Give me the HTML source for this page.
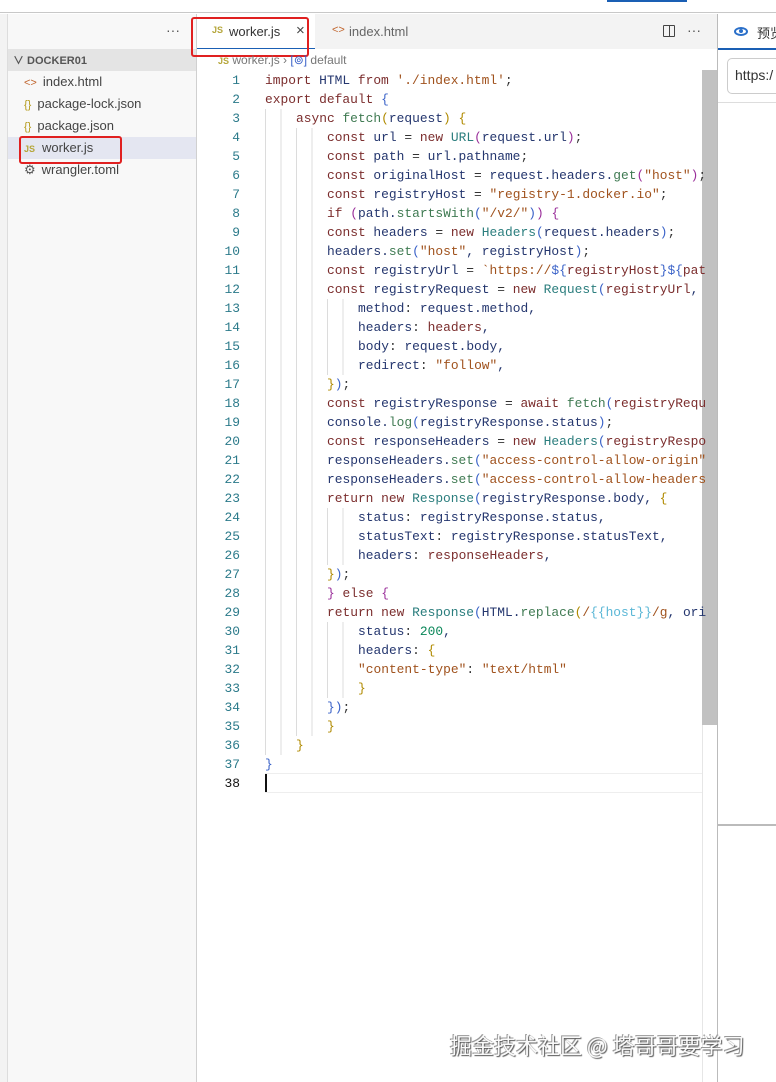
<!DOCTYPE html>
<html><head><meta charset="utf-8"><style>
*{margin:0;padding:0;box-sizing:border-box}
body{width:776px;height:1082px;overflow:hidden;background:#fff;font-family:"Liberation Sans","Noto Sans CJK SC",sans-serif;position:relative}
.a{position:absolute}
.code{position:absolute;left:197px;top:71px;width:506px}
.ln{height:19px;line-height:19px;font-family:"Liberation Mono",monospace;font-size:12.9px;white-space:pre;position:relative;color:#24366e}
.ln .no{position:absolute;left:0;width:43px;text-align:right;color:#2b7a8a}
.ln .c{position:absolute;left:68px}
.ind{display:inline-block;height:19px;vertical-align:top;background:repeating-linear-gradient(to right,#dcdcdc 0 1px,transparent 1px 15.5px)}
.k{color:#7b2d2d}.s{color:#a0521d}.f{color:#3f7a52}.n{color:#098658}.p{color:#333}.b1{color:#b08a00}.b2{color:#3a62c8}.b3{color:#9a2f9a}.t{color:#2a7d7d}.cy{color:#5bb7d6}
.side div{height:22px;line-height:22px;font-size:13px;color:#444}
</style></head><body>
<div class="a" style="left:0;top:0;width:776px;height:13px;background:#fff;border-bottom:1px solid #c8c8c8"></div>
<div class="a" style="left:607px;top:0;width:80px;height:2px;background:#1a5fb4"></div>
<div class="a" style="left:0;top:14px;width:8px;height:1068px;background:#f3f3f3;border-right:1px solid #ddd"></div>
<div class="a" style="left:8px;top:14px;width:189px;height:1068px;background:#f8f8f8;border-right:1px solid #d0d0d0"></div>
<div class="a" style="left:166px;top:22px;font-size:14px;color:#555">···</div>
<div class="a" style="left:8px;top:49px;width:188px;height:22px;background:#e4e4e4"></div>
<div class="a" style="left:13px;top:52px;font-size:11px;font-weight:bold;color:#555">∨ DOCKER01</div>
<div class="a side" style="left:24px;top:71px;width:172px">
<div><span style="color:#c0642c;font-size:11px;margin-right:6px">&lt;&gt;</span>index.html</div>
<div><span style="color:#b59b1c;font-size:11px;margin-right:6px">{}</span>package-lock.json</div>
<div><span style="color:#b59b1c;font-size:11px;margin-right:6px">{}</span>package.json</div>
<div style="background:#e4e6f1;margin-left:-16px;padding-left:16px"><span style="color:#b5a63a;font-size:9px;font-weight:bold;margin-right:7px">JS</span>worker.js</div>
<div><span style="color:#555;font-size:13px;margin-right:6px">⚙</span>wrangler.toml</div>
</div>
<div class="a" style="left:19px;top:136px;width:103px;height:28px;border:2px solid #e02020;border-radius:3px"></div>
<div class="a" style="left:197px;top:14px;width:520px;height:35px;background:#f3f3f3"></div>
<div class="a" style="left:197px;top:14px;width:118px;height:35px;background:#fff;border-bottom:1px solid #1a5fb4"></div>
<div class="a" style="left:212px;top:25px;font-size:9px;font-weight:bold;color:#b5a63a">JS</div>
<div class="a" style="left:229px;top:24px;font-size:13px;color:#333">worker.js</div>
<div class="a" style="left:296px;top:22px;font-size:15px;color:#444">×</div>
<div class="a" style="left:332px;top:24px;font-size:11px;color:#c0642c">&lt;&gt;</div>
<div class="a" style="left:349px;top:24px;font-size:13px;color:#666">index.html</div>
<div class="a" style="left:191px;top:17px;width:118px;height:40px;border:2px solid #e02020;border-radius:3px"></div>
<div class="a" style="left:663px;top:25px;width:12px;height:12px;border:1.5px solid #444;border-radius:1px"></div>
<div class="a" style="left:668.5px;top:25px;width:1.5px;height:12px;background:#444"></div>
<div class="a" style="left:687px;top:22px;font-size:14px;color:#555">···</div>
<div class="a" style="left:218px;top:53px;font-size:12px;color:#777"><span style="color:#b5a63a;font-size:9px;font-weight:bold">JS</span> worker.js › <span style="color:#3a62c8">[⊚]</span> default</div>
<div class="a" style="left:702px;top:70px;width:1px;height:1012px;background:#e6e6e6"></div>
<div class="a" style="left:702px;top:70px;width:15px;height:655px;background:#c1c1c1"></div>
<div class="a" style="left:265px;top:773px;width:437px;height:20px;border-top:1px solid #eee;border-bottom:1px solid #eee"></div>
<div class="a" style="left:265px;top:774px;width:2px;height:18px;background:#111"></div>
<div class="code">
<div class="ln"><span class="no">1</span><span class="c"><span class="k">import</span> HTML <span class="k">from</span> <span class="s">'./index.html'</span><span class="p">;</span></span></div>
<div class="ln"><span class="no">2</span><span class="c"><span class="k">export default</span> <span class="b2">{</span></span></div>
<div class="ln"><span class="no">3</span><span class="c"><span class="ind" style="width:31px"></span><span class="k">async</span> <span class="f">fetch</span><span class="b1">(</span>request<span class="b1">)</span> <span class="b1">{</span></span></div>
<div class="ln"><span class="no">4</span><span class="c"><span class="ind" style="width:62px"></span><span class="k">const</span> url <span class="p">=</span> <span class="k">new</span> <span class="t">URL</span><span class="b3">(</span>request.url<span class="b3">)</span><span class="p">;</span></span></div>
<div class="ln"><span class="no">5</span><span class="c"><span class="ind" style="width:62px"></span><span class="k">const</span> path <span class="p">=</span> url.pathname<span class="p">;</span></span></div>
<div class="ln"><span class="no">6</span><span class="c"><span class="ind" style="width:62px"></span><span class="k">const</span> originalHost <span class="p">=</span> request.headers.<span class="f">get</span><span class="b3">(</span><span class="s">"host"</span><span class="b3">)</span><span class="p">;</span></span></div>
<div class="ln"><span class="no">7</span><span class="c"><span class="ind" style="width:62px"></span><span class="k">const</span> registryHost <span class="p">=</span> <span class="s">"registry-1.docker.io"</span><span class="p">;</span></span></div>
<div class="ln"><span class="no">8</span><span class="c"><span class="ind" style="width:62px"></span><span class="k">if</span> <span class="b3">(</span>path.<span class="f">startsWith</span><span class="b2">(</span><span class="s">"/v2/"</span><span class="b2">)</span><span class="b3">)</span> <span class="b3">{</span></span></div>
<div class="ln"><span class="no">9</span><span class="c"><span class="ind" style="width:62px"></span><span class="k">const</span> headers <span class="p">=</span> <span class="k">new</span> <span class="t">Headers</span><span class="b2">(</span>request.headers<span class="b2">)</span><span class="p">;</span></span></div>
<div class="ln"><span class="no">10</span><span class="c"><span class="ind" style="width:62px"></span>headers.<span class="f">set</span><span class="b2">(</span><span class="s">"host"</span>, registryHost<span class="b2">)</span><span class="p">;</span></span></div>
<div class="ln"><span class="no">11</span><span class="c"><span class="ind" style="width:62px"></span><span class="k">const</span> registryUrl <span class="p">=</span> <span class="s">`https://</span><span class="b2">${</span><span class="k">registryHost</span><span class="b2">}${</span><span class="k">pat</span></span></div>
<div class="ln"><span class="no">12</span><span class="c"><span class="ind" style="width:62px"></span><span class="k">const</span> registryRequest <span class="p">=</span> <span class="k">new</span> <span class="t">Request</span><span class="b2">(</span><span class="k">registryUrl</span>,</span></div>
<div class="ln"><span class="no">13</span><span class="c"><span class="ind" style="width:93px"></span>method<span class="p">:</span> request.method,</span></div>
<div class="ln"><span class="no">14</span><span class="c"><span class="ind" style="width:93px"></span>headers<span class="p">:</span> <span class="k">headers</span>,</span></div>
<div class="ln"><span class="no">15</span><span class="c"><span class="ind" style="width:93px"></span>body<span class="p">:</span> request.body,</span></div>
<div class="ln"><span class="no">16</span><span class="c"><span class="ind" style="width:93px"></span>redirect<span class="p">:</span> <span class="s">"follow"</span>,</span></div>
<div class="ln"><span class="no">17</span><span class="c"><span class="ind" style="width:62px"></span><span class="b1">}</span><span class="b2">)</span><span class="p">;</span></span></div>
<div class="ln"><span class="no">18</span><span class="c"><span class="ind" style="width:62px"></span><span class="k">const</span> registryResponse <span class="p">=</span> <span class="k">await</span> <span class="f">fetch</span><span class="b2">(</span><span class="k">registryRequ</span></span></div>
<div class="ln"><span class="no">19</span><span class="c"><span class="ind" style="width:62px"></span>console.<span class="f">log</span><span class="b2">(</span>registryResponse.status<span class="b2">)</span><span class="p">;</span></span></div>
<div class="ln"><span class="no">20</span><span class="c"><span class="ind" style="width:62px"></span><span class="k">const</span> responseHeaders <span class="p">=</span> <span class="k">new</span> <span class="t">Headers</span><span class="b2">(</span><span class="k">registryRespo</span></span></div>
<div class="ln"><span class="no">21</span><span class="c"><span class="ind" style="width:62px"></span>responseHeaders.<span class="f">set</span><span class="b2">(</span><span class="s">"access-control-allow-origin"</span></span></div>
<div class="ln"><span class="no">22</span><span class="c"><span class="ind" style="width:62px"></span>responseHeaders.<span class="f">set</span><span class="b2">(</span><span class="s">"access-control-allow-headers</span></span></div>
<div class="ln"><span class="no">23</span><span class="c"><span class="ind" style="width:62px"></span><span class="k">return new</span> <span class="t">Response</span><span class="b2">(</span>registryResponse.body, <span class="b1">{</span></span></div>
<div class="ln"><span class="no">24</span><span class="c"><span class="ind" style="width:93px"></span>status<span class="p">:</span> registryResponse.status,</span></div>
<div class="ln"><span class="no">25</span><span class="c"><span class="ind" style="width:93px"></span>statusText<span class="p">:</span> registryResponse.statusText,</span></div>
<div class="ln"><span class="no">26</span><span class="c"><span class="ind" style="width:93px"></span>headers<span class="p">:</span> <span class="k">responseHeaders</span>,</span></div>
<div class="ln"><span class="no">27</span><span class="c"><span class="ind" style="width:62px"></span><span class="b1">}</span><span class="b2">)</span><span class="p">;</span></span></div>
<div class="ln"><span class="no">28</span><span class="c"><span class="ind" style="width:62px"></span><span class="b3">}</span> <span class="k">else</span> <span class="b3">{</span></span></div>
<div class="ln"><span class="no">29</span><span class="c"><span class="ind" style="width:62px"></span><span class="k">return new</span> <span class="t">Response</span><span class="b2">(</span>HTML.<span class="f">replace</span><span class="b1">(</span><span class="s">/</span><span class="cy">{{host}}</span><span class="s">/g</span>, ori</span></div>
<div class="ln"><span class="no">30</span><span class="c"><span class="ind" style="width:93px"></span>status<span class="p">:</span> <span class="n">200</span>,</span></div>
<div class="ln"><span class="no">31</span><span class="c"><span class="ind" style="width:93px"></span>headers<span class="p">:</span> <span class="b1">{</span></span></div>
<div class="ln"><span class="no">32</span><span class="c"><span class="ind" style="width:93px"></span><span class="s">"content-type"</span><span class="p">:</span> <span class="s">"text/html"</span></span></div>
<div class="ln"><span class="no">33</span><span class="c"><span class="ind" style="width:93px"></span><span class="b1">}</span></span></div>
<div class="ln"><span class="no">34</span><span class="c"><span class="ind" style="width:62px"></span><span class="b2">})</span><span class="p">;</span></span></div>
<div class="ln"><span class="no">35</span><span class="c"><span class="ind" style="width:62px"></span><span class="b1">}</span></span></div>
<div class="ln"><span class="no">36</span><span class="c"><span class="ind" style="width:31px"></span><span class="b1">}</span></span></div>
<div class="ln"><span class="no">37</span><span class="c"><span class="b2">}</span></span></div>
<div class="ln"><span class="no" style="color:#111">38</span><span class="c"></span></div>
</div>
<div class="a" style="left:717px;top:14px;width:59px;height:1068px;background:#fff;border-left:1.5px solid #bbb"></div>
<div class="a" style="left:718px;top:48px;width:58px;height:2px;background:#1a5fb4"></div>
<div class="a" style="left:734px;top:27px;width:14px;height:9px;border:2px solid #2a6fc9;border-radius:50%"></div>
<div class="a" style="left:739px;top:29px;width:4px;height:4px;background:#2a6fc9;border-radius:50%"></div>
<div class="a" style="left:757px;top:23px;font-size:13px;color:#333;white-space:nowrap">预览</div>
<div class="a" style="left:727px;top:58px;width:60px;height:36px;border:1px solid #ccc;border-radius:5px"></div>
<div class="a" style="left:735px;top:67px;font-size:14px;color:#333">https:/</div>
<div class="a" style="left:718px;top:102px;width:58px;height:1px;background:#ddd"></div>
<div class="a" style="left:718px;top:824px;width:58px;height:2px;background:#bbb"></div>
<div class="a" style="left:450px;top:1029px;font-size:22px;color:#fafafa;text-shadow:1px 1px 1px #555,-1px -1px 0 #999;font-family:'Noto Sans CJK SC',sans-serif;white-space:nowrap">掘金技术社区 @ 塔哥哥要学习</div>
</body></html>
